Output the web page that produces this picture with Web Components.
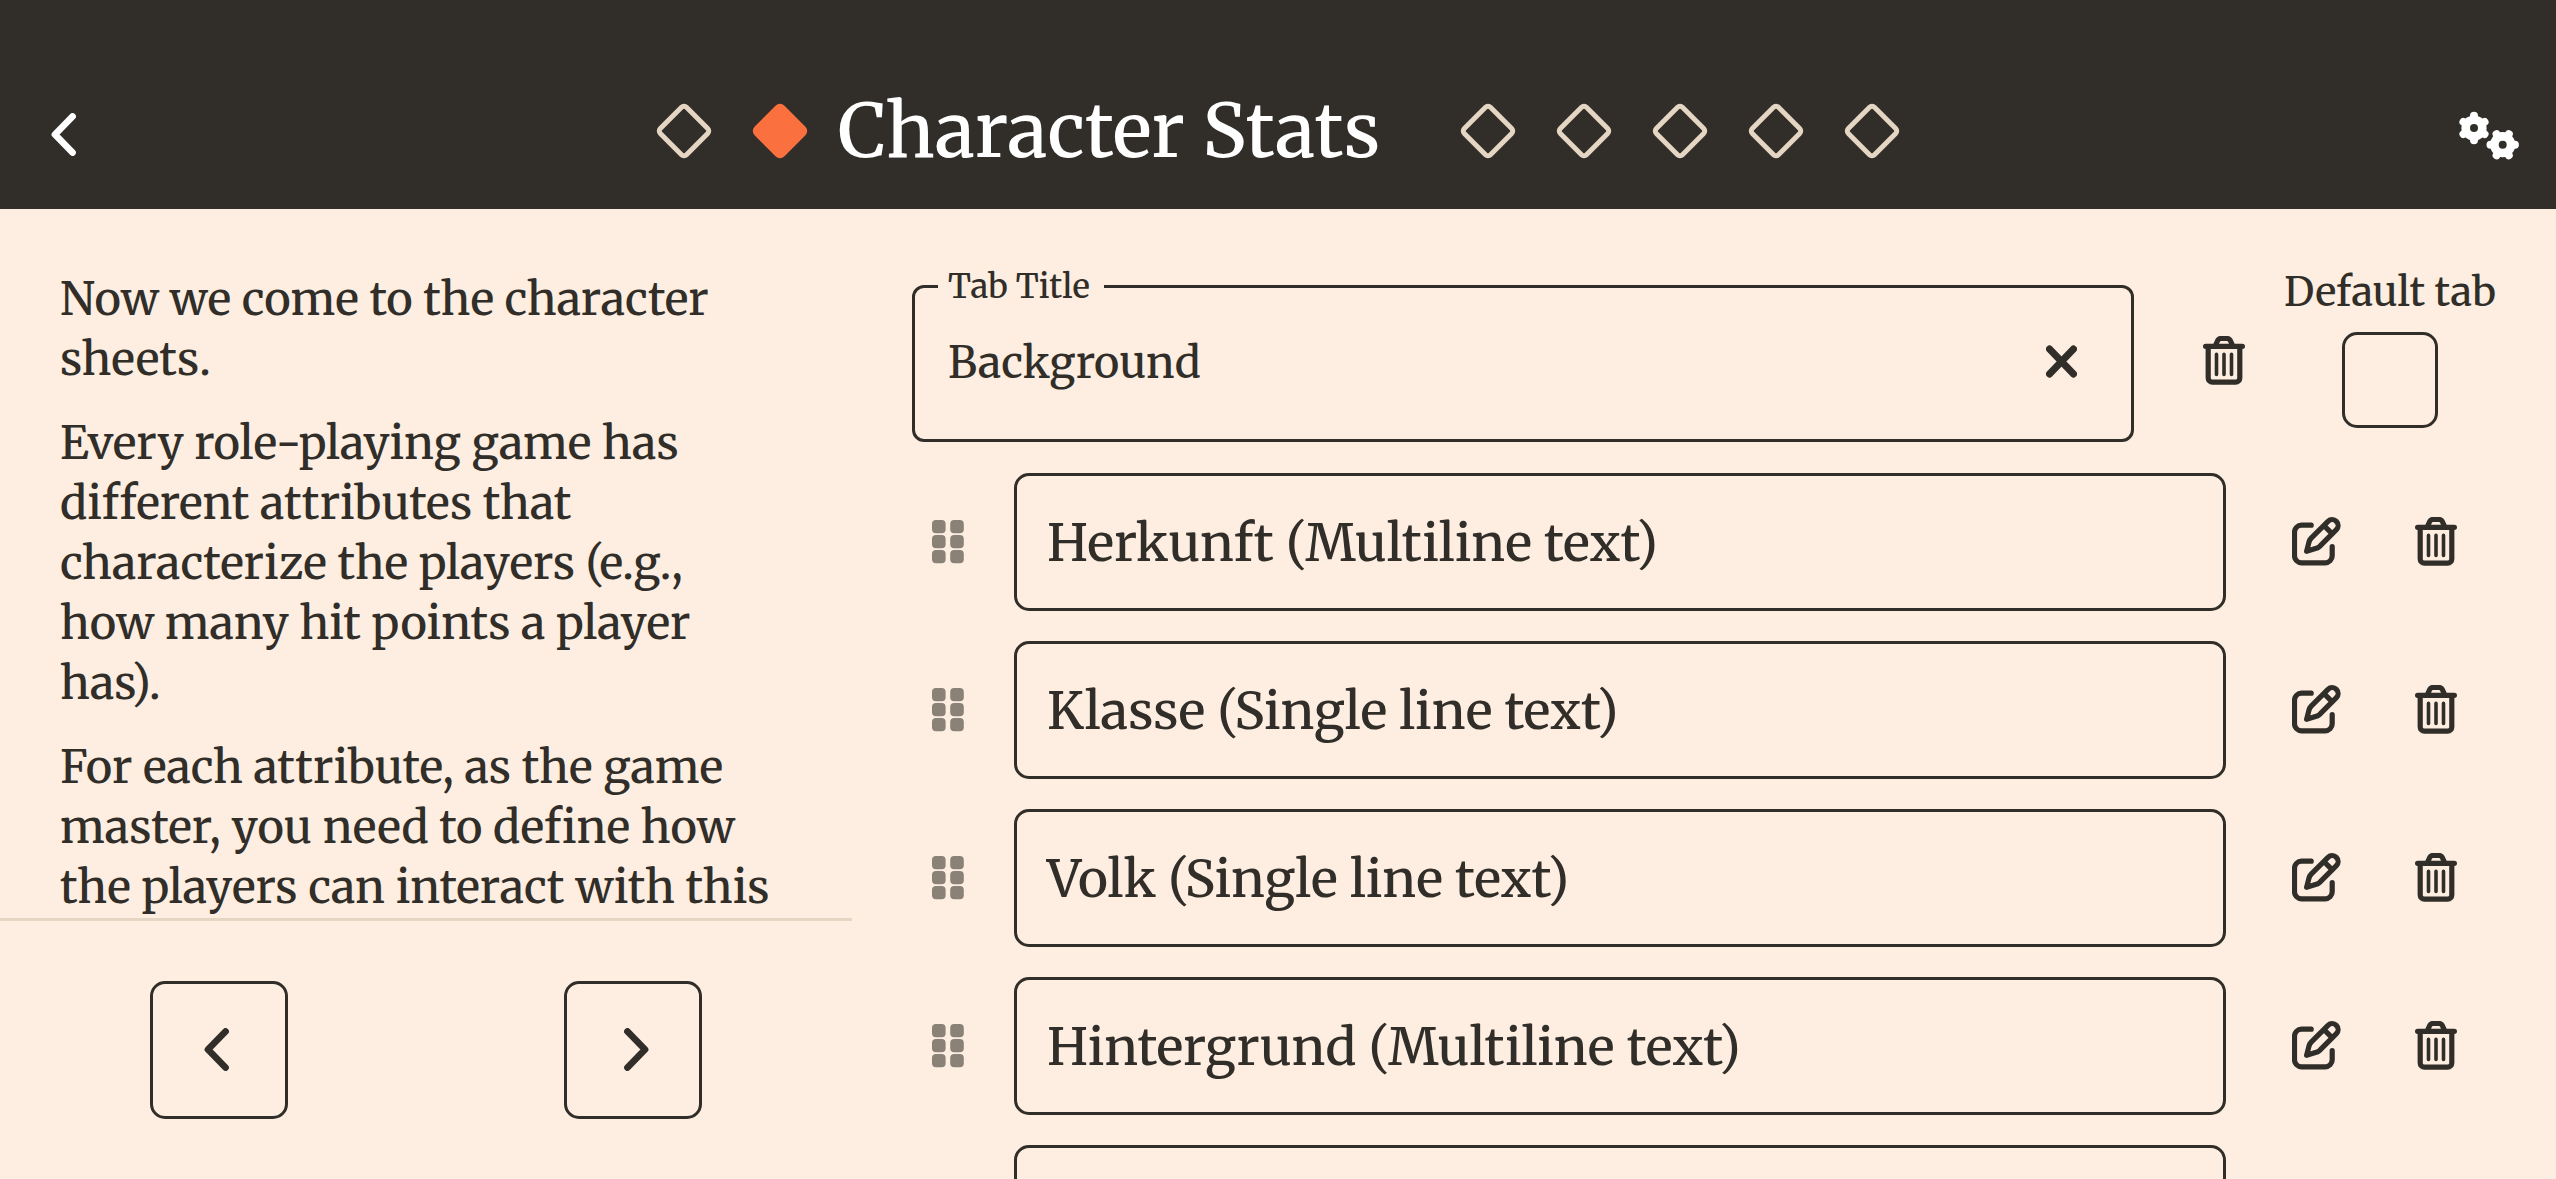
<!DOCTYPE html>
<html lang="en">
<head>
<meta charset="utf-8">
<meta name="viewport" content="width=device-width, initial-scale=1">
<title>Character Stats</title>
<style>
  :root {
    --ink: #312e29;
    --paper: #fdeee1;
    --sand: #e5d5c3;
    --accent: #fb703f;
    --grip: #8a8276;
  }
  body {
    margin: 0;
    background: var(--paper);
    color: var(--ink);
    font-family: Merriweather, "DejaVu Serif Condensed", "DejaVu Serif", serif;
    font-weight: 500;
  }
</style>
</head>
<body>
<stats-page></stats-page>

<script>
const ICONS = {
  back: [31, 45, '0 0 31 45', '<path d="M21.5 3.5 4 21.5 21.5 39.5" stroke-width="6.8"/>'],
  next: [31, 45, '0 0 31 45', '<path d="M9.5 3.5 27 21.5 9.5 39.5" stroke-width="6.8"/>'],
  clear: [31, 37, '0 0 31 37', '<path d="M3.5 4 27.5 29M27.5 4 3.5 29" stroke-width="7"/>'],
  trash: [42, 51, '0 0 42 51',
    '<path d="M2.600 10.300H39.400M5.200 10.300V42a4.200 4.200 0 0 0 4.200 4.200h23.200a4.200 4.200 0 0 0 4.200-4.200V10.300M12.400 9.500l1.800-4Q15.400 2.500 18 2.500h6Q26.600 2.500 27.800 5.500l1.800 4" stroke-width="5.200"/>' +
    '<path d="M13.500 18.400V38.400M21 18.400V38.400M28.500 18.400V38.400" stroke-width="3.600"/>'],
  edit: [49, 50, '0 0 49 50',
    '<path d="M19.200 8.200H9.500a7 7 0 0 0-7 7V38.800a7 7 0 0 0 7 7H33.200a7 7 0 0 0 7-7V29.500" stroke-width="5.200"/>' +
    '<path d="M36 4.300 19.200 21.100Q17.600 22.800 17 25L14.600 34.300 23.500 31.600Q25.700 31 27.400 29.700L44.400 12.700A5.940 5.940 0 0 0 36 4.300ZM32 8.700 40 16.700" stroke-width="5.200"/>'],
  gears: [62, 50, '9 11 62 50',
    '<g fill="currentColor" stroke-width="8"><circle cx="25" cy="28" r="12.600" stroke="none"/><path d="M25 15.800V40.200M14.430 21.900 35.570 34.100M14.430 34.100 35.570 21.900"/>' +
    '<circle cx="53.700" cy="44.700" r="12.600" stroke="none"/><path d="M41.500 44.700H65.900M47.600 34.130 59.800 55.270M59.800 34.130 47.600 55.270"/></g>' +
    '<g fill="#312e29" stroke="none"><circle cx="25" cy="28" r="4"/><circle cx="53.700" cy="44.700" r="4"/></g>'],
  grip: [32, 45, '0 0 32 45',
    '<g fill="currentColor" stroke="none">' + [0, 15, 30].map(y =>
      `<rect x="0" y="${y}" width="13.600" height="13.200" rx="4"/><rect x="18.200" y="${y}" width="13.600" height="13.200" rx="4"/>`).join('') + '</g>']
};

function define(name, html, setup) {
  const template = document.createElement('template');
  template.innerHTML = html;
  customElements.define(name, class extends HTMLElement {
    constructor() {
      super();
      this.attachShadow({ mode: 'open' }).append(template.content.cloneNode(true));
    }
    connectedCallback() {
      if (setup) setup(this, this.shadowRoot);
    }
  });
}

define('app-icon', `
  <style>
    :host { display: inline-flex; }
    svg { display: block; }
  </style>
  <svg aria-hidden="true" fill="none" stroke="currentColor" stroke-linecap="round" stroke-linejoin="round"></svg>`,
  (el, root) => {
    const [w, h, box, body] = ICONS[el.getAttribute('name')];
    const svg = root.querySelector('svg');
    svg.setAttribute('width', w);
    svg.setAttribute('height', h);
    svg.setAttribute('viewBox', box);
    svg.innerHTML = body;
  });

define('icon-button', `
  <style>
    :host { display: inline-flex; }
    button {
      flex: 1; display: flex; align-items: center; justify-content: center;
      margin: 0; padding: 0; border: 0; background: none; color: inherit; cursor: pointer;
    }
    :host([boxed]) button {
      box-sizing: border-box; width: 138px; height: 138px;
      border: 3px solid var(--ink); border-radius: 15px;
    }
  </style>
  <button type="button"></button>`,
  (el, root) => {
    const icon = document.createElement('app-icon');
    icon.setAttribute('name', el.getAttribute('icon'));
    root.querySelector('button').replaceChildren(icon);
    root.querySelector('button').setAttribute('aria-label', el.getAttribute('label'));
  });

define('step-dot', `
  <style>
    :host { display: flex; width: 96px; height: 96px; }
    button {
      width: 42px; height: 42px; margin: auto; padding: 0; box-sizing: border-box;
      border: 5px solid var(--sand); border-radius: 6px; background: none;
      transform: rotate(45deg);
    }
    :host([current]) button { border-color: var(--accent); background: var(--accent); }
  </style>
  <button type="button" aria-label="Step"></button>`);

define('app-header', `
  <style>
    :host {
      display: grid; grid-template-columns: 1fr auto 1fr; align-items: center;
      box-sizing: border-box; height: 209px; padding: 62px 36px 0;
      background: var(--ink); color: #fff;
    }
    .back { justify-self: start; padding-left: 15px; }
    .settings { justify-self: end; }
    nav { display: flex; align-items: center; padding-bottom: 9px; }
    h1 {
      margin: 0; padding: 0 60px 0 10px;
      font-size: 74px; line-height: 96px; font-weight: inherit; white-space: nowrap;
    }
  </style>
  <icon-button class="back" icon="back" label="Back"></icon-button>
  <nav>
    <step-dot></step-dot>
    <step-dot current></step-dot>
    <h1><slot></slot></h1>
    <step-dot></step-dot>
    <step-dot></step-dot>
    <step-dot></step-dot>
    <step-dot></step-dot>
    <step-dot></step-dot>
  </nav>
  <icon-button class="settings" icon="gears" label="Settings"></icon-button>`);

define('guide-panel', `
  <style>
    :host { display: flex; flex-direction: column; min-height: 0; }
    .text {
      flex: 1; min-height: 0; overflow: hidden;
      padding: 60px 72px 0 60px;
      font-size: 45px; line-height: 60px;
    }
    ::slotted(p) { margin: 0 0 24px; }
    footer {
      display: grid; grid-template-columns: 1fr 1fr; justify-items: center;
      padding: 60px 12px; border-top: 3px solid var(--sand);
    }
  </style>
  <div class="text"><slot></slot></div>
  <footer>
    <icon-button boxed icon="back" label="Previous step"></icon-button>
    <icon-button boxed icon="next" label="Next step"></icon-button>
  </footer>`);

define('title-field', `
  <style>
    :host { display: block; }
    fieldset {
      display: block; min-width: 0; margin: 0; padding: 0 54px 19px 23px;
      border: 3px solid var(--ink); border-radius: 12px;
    }
    legend { padding: 0 14px 0 10px; font-size: 33px; line-height: 39px; }
    .line { display: flex; height: 114px; }
    input {
      flex: 1; min-width: 0; margin: 0; padding: 0 0 0 10px; border: 0; outline: 0;
      background: none; color: inherit; font: inherit; font-size: 43px;
    }
  </style>
  <fieldset>
    <legend><label for="title"></label></legend>
    <div class="line">
      <input id="title" type="text">
      <icon-button icon="clear" label="Clear"></icon-button>
    </div>
  </fieldset>`,
  (el, root) => {
    root.querySelector('label').textContent = el.getAttribute('label');
    root.querySelector('input').value = el.getAttribute('value');
  });

define('default-toggle', `
  <style>
    :host { display: flex; flex-direction: column; align-items: center; gap: 15px; }
    label { font-size: 40px; line-height: 50px; white-space: nowrap; }
    input {
      appearance: none; box-sizing: border-box; width: 96px; height: 96px; margin: 0;
      border: 3px solid var(--ink); border-radius: 15px; background: none;
    }
  </style>
  <label for="toggle"><slot></slot></label>
  <input id="toggle" type="checkbox">`);

define('stat-row', `
  <style>
    :host {
      display: grid; grid-template-columns: 72px minmax(0, 1fr) 120px 120px;
      align-items: center;
    }
    .grip { justify-self: center; color: var(--grip); }
    .name {
      box-sizing: border-box; height: 138px; margin: 0 30px; padding: 0 30px;
      border: 3px solid var(--ink); border-radius: 15px;
      font-size: 51px; line-height: 134px; white-space: nowrap;
    }
    icon-button { height: 120px; }
  </style>
  <app-icon class="grip" name="grip"></app-icon>
  <div class="name"><slot></slot></div>
  <icon-button icon="edit" label="Edit"></icon-button>
  <icon-button icon="trash" label="Delete"></icon-button>`);

define('stats-editor', `
  <style>
    :host {
      display: flex; flex-direction: column; gap: 30px; min-height: 0; overflow: hidden;
      box-sizing: border-box; padding: 58px 60px 0;
    }
    .top {
      display: grid; grid-template-columns: minmax(0, 1fr) 120px 212px;
      padding-bottom: 1px;
    }
    .top title-field { margin-right: 30px; }
    .top icon-button { padding-top: 14px; }
  </style>
  <div class="top">
    <title-field label="Tab Title" value="Background"></title-field>
    <icon-button icon="trash" label="Delete tab"></icon-button>
    <default-toggle>Default tab</default-toggle>
  </div>
  <slot></slot>`);

define('stats-page', `
  <style>
    :host { display: flex; flex-direction: column; height: 100vh; overflow: hidden; }
    main {
      flex: 1; min-height: 0;
      display: grid; grid-template: minmax(0, 1fr) / minmax(0, 1fr) minmax(0, 2fr);
    }
    stat-row { flex: none; }
  </style>
  <app-header>Character Stats</app-header>
  <main>
    <guide-panel>
      <p>Now we come to the character sheets.</p>
      <p>Every role-playing game has different attributes that characterize the players (e.g., how many hit points a player has).</p>
      <p>For each attribute, as the game master, you need to define how the players can interact with this</p>
    </guide-panel>
    <stats-editor>
      <stat-row>Herkunft (Multiline text)</stat-row>
      <stat-row>Klasse (Single line text)</stat-row>
      <stat-row>Volk (Single line text)</stat-row>
      <stat-row>Hintergrund (Multiline text)</stat-row>
      <stat-row></stat-row>
    </stats-editor>
  </main>`);
</script>
</body>
</html>
